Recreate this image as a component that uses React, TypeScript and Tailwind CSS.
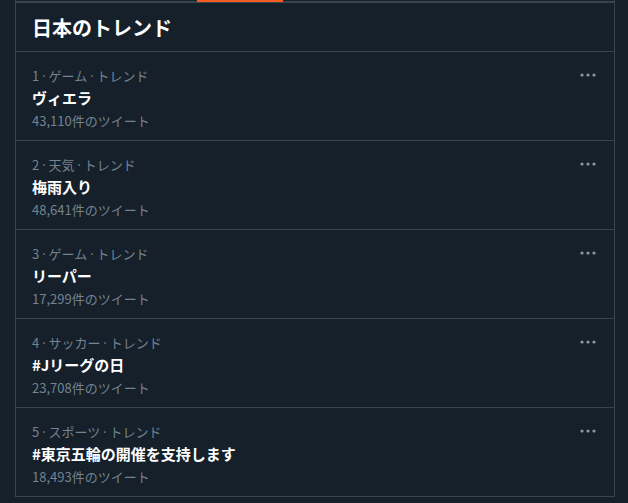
import React from 'react';

interface Trend {
  rank: number;
  category: string;
  title: string;
  count: string;
}

const trends: Trend[] = [
  { rank: 1, category: 'ゲーム', title: 'ヴィエラ', count: '43,110' },
  { rank: 2, category: '天気', title: '梅雨入り', count: '48,641' },
  { rank: 3, category: 'ゲーム', title: 'リーパー', count: '17,299' },
  { rank: 4, category: 'サッカー', title: '#Jリーグの日', count: '23,708' },
  { rank: 5, category: 'スポーツ', title: '#東京五輪の開催を支持します', count: '18,493' },
];

const font = { fontFamily: '"Noto Sans CJK JP", "Noto Sans", sans-serif' };

const MoreDots = () => (
  <svg width="16" height="4" viewBox="0 0 16 4" className="fill-[#8899a6]">
    <circle cx="2" cy="2" r="1.6" />
    <circle cx="8" cy="2" r="1.6" />
    <circle cx="14" cy="2" r="1.6" />
  </svg>
);

const TrendRow: React.FC<{ trend: Trend }> = ({ trend }) => (
  <div className="flex h-[89px] border-b border-[#38444d] pl-[16px] pr-[18px] pt-[12px]">
    <div className="flex-1">
      <div className="text-[13px] leading-[23px] text-[#74838f]">
        {trend.rank}<span className="mx-[1px]">·</span>{trend.category}<span className="mx-[1px]">·</span>トレンド
      </div>
      <div className="text-[15px] font-bold leading-[22px] text-white">{trend.title}</div>
      <div className="text-[13px] leading-[23px] text-[#74838f]">{trend.count}件のツイート</div>
    </div>
    <div className="pt-[9px]">
      <MoreDots />
    </div>
  </div>
);

export default function App() {
  return (
    <div className="h-[503px] w-[628px] overflow-hidden bg-[#15202b]" style={font}>
      <div className="ml-[15px] w-[600px] border-x border-[#38444d]">
        <div className="h-[3px] border-b-2 border-[#38444d]">
          <div className="ml-[181px] h-[2px] w-[86px] bg-[#f45d22]" />
        </div>
        <div className="flex h-[49px] items-center border-b border-[#38444d] px-[16px] pt-[2px]">
          <h2 className="text-[20px] font-bold text-white">日本のトレンド</h2>
        </div>
        {trends.map((t) => (
          <TrendRow key={t.rank} trend={t} />
        ))}
      </div>
    </div>
  );
}
